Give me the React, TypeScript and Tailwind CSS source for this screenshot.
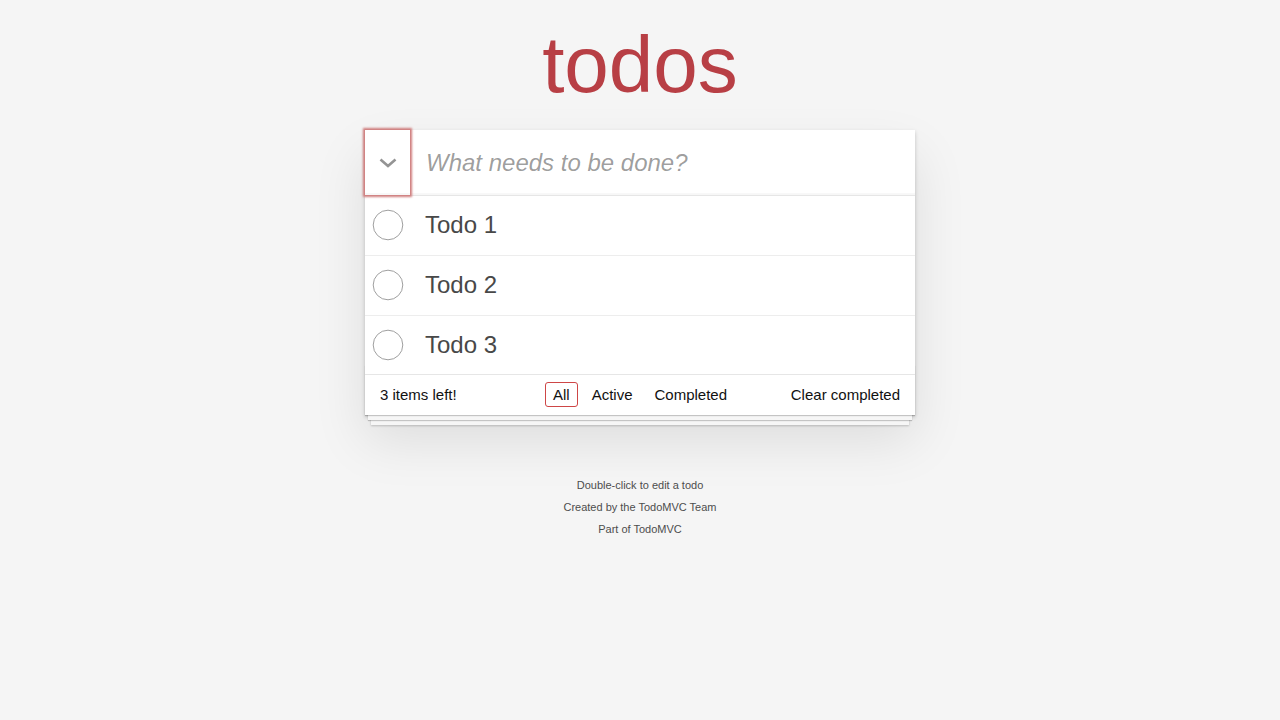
import { FC } from "react";

type Todo = {
    id: number;
    title: string;
};

const todos: Todo[] = [
    { id: 1, title: "Todo 1" },
    { id: 2, title: "Todo 2" },
    { id: 3, title: "Todo 3" },
];

const filters = ["All", "Active", "Completed"];

const Circle: FC = () => (
    <svg width="40" height="40" viewBox="0 0 40 40" className="shrink-0" aria-hidden="true">
        <circle cx="23" cy="20" r="14.8" fill="none" stroke="#949494" strokeWidth="0.9" />
    </svg>
);

const TodoItem: FC<{ todo: Todo }> = ({ todo }) => (
    <li className="relative flex items-center border-b border-[#ededed] last:border-b-0 text-[24px]">
        <div className="absolute inset-y-0 left-0 flex items-center">
            <Circle />
        </div>
        <label className="block w-full py-[15px] pr-[15px] pl-[60px] leading-[1.2] text-[#484848]">
            {todo.title}
        </label>
    </li>
);

export default function App() {
    return (
        <div className="min-h-[720px] bg-[#f5f5f5] font-['Liberation_Sans',Arial,sans-serif] text-[14px] leading-[19.6px] text-[#111111]">
            <div className="mx-auto max-w-[550px] pt-[25px]">
                <h1 className="mb-[25px] h-[80px] text-center text-[80px] leading-[80px] font-normal text-[#b83f45]">
                    todos
                </h1>

                <section className="bg-white shadow-[0_2px_4px_0_rgba(0,0,0,0.2),0_25px_50px_0_rgba(0,0,0,0.1)]">
                    <header className="flex h-[65px] shadow-[inset_0_-2px_1px_rgba(0,0,0,0.03)]">
                        <button className="flex h-[65px] w-[45px] shrink-0 items-center justify-center shadow-[0_0_2px_2px_#cf7d7d]">
                            <svg width="18" height="10" viewBox="0 0 18 10" className="mt-[1px]" aria-hidden="true">
                                <path d="M1.5 1.5 L9 8 L16.5 1.5" fill="none" stroke="#949494" strokeWidth="2.6" />
                            </svg>
                        </button>
                        <input
                            className="h-[65px] flex-1 bg-transparent py-4 pr-4 pl-[16px] text-[24px] leading-[33.6px] text-[#111] outline-none placeholder:italic placeholder:text-[rgba(0,0,0,0.4)]"
                            placeholder="What needs to be done?"
                        />
                    </header>

                    <main className="border-t border-[#e6e6e6]">
                        <ul>
                            {todos.map((todo) => (
                                <TodoItem key={todo.id} todo={todo} />
                            ))}
                        </ul>
                    </main>

                    <footer className="relative grid h-[41px] grid-cols-[1fr_auto_1fr] items-center border-t border-[#e6e6e6] px-[15px] pb-[2px] text-[15px] before:absolute before:inset-x-0 before:bottom-0 before:h-[50px] before:overflow-hidden before:shadow-[0_1px_1px_rgba(0,0,0,0.2),0_8px_0_-3px_#f6f6f6,0_9px_1px_-3px_rgba(0,0,0,0.2),0_16px_0_-6px_#f6f6f6,0_17px_2px_-6px_rgba(0,0,0,0.2)]">
                        <span className="justify-self-start">3 items left!</span>
                        <ul className="relative flex">
                            {filters.map((name) => (
                                <li key={name}>
                                    <a
                                        className={`m-[3px] block rounded-[3px] border px-[7px] py-[3px] leading-[17px] ${
                                            name === "All" ? "border-[#ce4646]" : "border-transparent"
                                        }`}
                                    >
                                        {name}
                                    </a>
                                </li>
                            ))}
                        </ul>
                        <button className="relative justify-self-end text-[15px] leading-[19.6px] text-[#111]">
                            Clear completed
                        </button>
                    </footer>
                </section>

                <footer className="mt-[65px] flex flex-col gap-[11px] text-center text-[11px] leading-[11px] text-[#4d4d4d]">
                    <p>Double-click to edit a todo</p>
                    <p>Created by the TodoMVC Team</p>
                    <p>
                        Part of <a>TodoMVC</a>
                    </p>
                </footer>
            </div>
        </div>
    );
}
